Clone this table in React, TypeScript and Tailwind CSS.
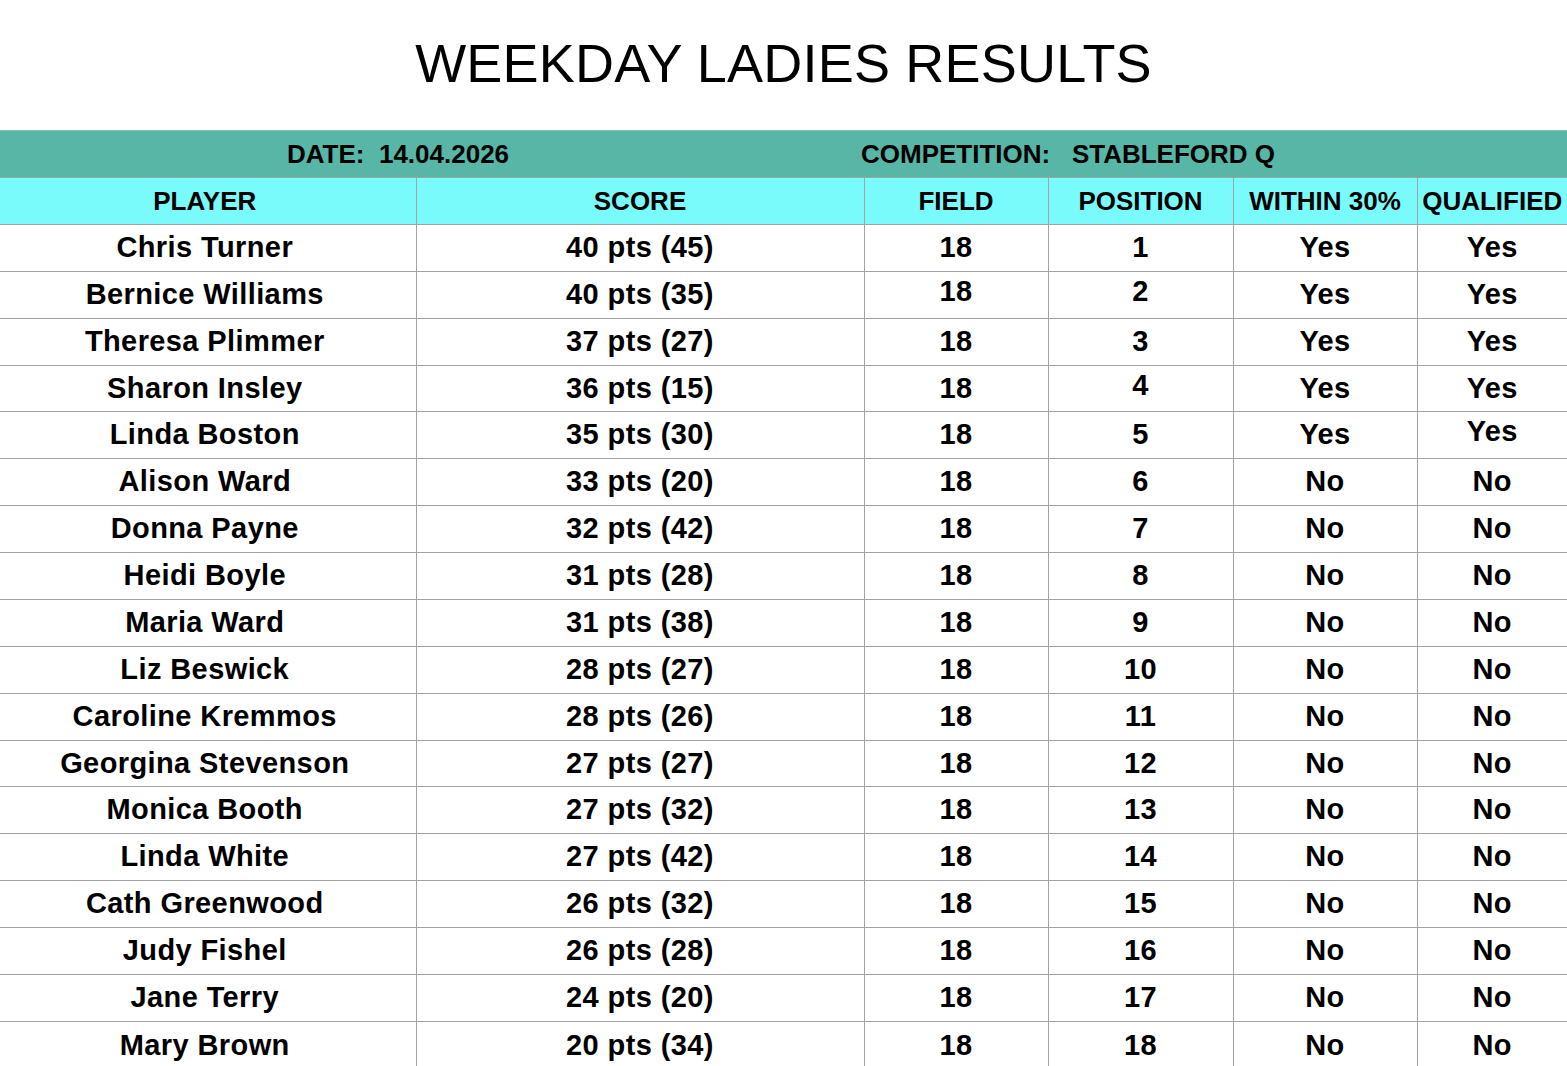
import React from "react";

const rows: [string, string, string, string, string, string][] = [
  ["Chris Turner", "40 pts (45)", "18", "1", "Yes", "Yes"],
  ["Bernice Williams", "40 pts (35)", "18", "2", "Yes", "Yes"],
  ["Theresa Plimmer", "37 pts (27)", "18", "3", "Yes", "Yes"],
  ["Sharon Insley", "36 pts (15)", "18", "4", "Yes", "Yes"],
  ["Linda Boston", "35 pts (30)", "18", "5", "Yes", "Yes"],
  ["Alison Ward", "33 pts (20)", "18", "6", "No", "No"],
  ["Donna Payne", "32 pts (42)", "18", "7", "No", "No"],
  ["Heidi Boyle", "31 pts (28)", "18", "8", "No", "No"],
  ["Maria Ward", "31 pts (38)", "18", "9", "No", "No"],
  ["Liz Beswick", "28 pts (27)", "18", "10", "No", "No"],
  ["Caroline Kremmos", "28 pts (26)", "18", "11", "No", "No"],
  ["Georgina Stevenson", "27 pts (27)", "18", "12", "No", "No"],
  ["Monica Booth", "27 pts (32)", "18", "13", "No", "No"],
  ["Linda White", "27 pts (42)", "18", "14", "No", "No"],
  ["Cath Greenwood", "26 pts (32)", "18", "15", "No", "No"],
  ["Judy Fishel", "26 pts (28)", "18", "16", "No", "No"],
  ["Jane Terry", "24 pts (20)", "18", "17", "No", "No"],
  ["Mary Brown", "20 pts (34)", "18", "18", "No", "No"],
];

// cells nudged upward in the reference (row index, col index)
const raised = new Set(["1-2", "1-3", "3-3", "4-5"]);

const widths = ["w-[416px]", "w-[448px]", "w-[184px]", "w-[185px]", "w-[184px]", "w-[150px]"];

export default function App() {
  return (
    <div
      className="w-[1567px] h-[1066px] overflow-hidden bg-white text-black"
      style={{ fontFamily: '"Liberation Sans", Arial, Helvetica, sans-serif' }}
    >
      <div className="h-[130px] flex items-center justify-center pb-[4px]">
        <h1 className="text-[54px] font-normal leading-none tracking-[0.2px]">WEEKDAY LADIES RESULTS</h1>
      </div>
      <table className="border-collapse table-fixed w-[1567px]">
        <colgroup>
          {widths.map((w, i) => (
            <col key={i} className={w} />
          ))}
        </colgroup>
        <thead>
          <tr className="h-[47px] bg-[#58b6a6] border-t border-[#8fbfb6]">
            <td colSpan={2} className="p-0 text-[26px] font-bold whitespace-pre">
              <span className="pl-[287px]">DATE:  14.04.2026</span>
            </td>
            <td colSpan={4} className="p-0 text-[26px] font-bold whitespace-pre">
              <span className="ml-[-3px]">COMPETITION:   STABLEFORD Q</span>
            </td>
          </tr>
          <tr className="h-[47px] bg-[#7afbfb]">
            {["PLAYER", "SCORE", "FIELD", "POSITION", "WITHIN 30%", "QUALIFIED"].map((h, i) => (
              <th
                key={h}
                className={`p-0 text-[26px] font-bold text-center border-t border-[#a3a3a3] ${i > 0 ? "border-l" : "pr-[6px]"} whitespace-nowrap`}
              >
                {h}
              </th>
            ))}
          </tr>
        </thead>
        <tbody>
          {rows.map((r, ri) => (
            <tr key={ri} className={ri === 3 || ri === 11 ? "h-[46px]" : "h-[47px]"}>
              {r.map((c, ci) => (
                <td
                  key={ci}
                  className={`p-0 text-[29px] tracking-[0.4px] font-bold text-center whitespace-nowrap border-t border-[#a3a3a3] ${ci > 0 ? "border-l" : "pr-[6px]"}`}
                >
                  <span className={`relative ${raised.has(`${ri}-${ci}`) ? "top-[-3px]" : "top-[0px]"}`}>{c}</span>
                </td>
              ))}
            </tr>
          ))}
        </tbody>
      </table>
    </div>
  );
}
